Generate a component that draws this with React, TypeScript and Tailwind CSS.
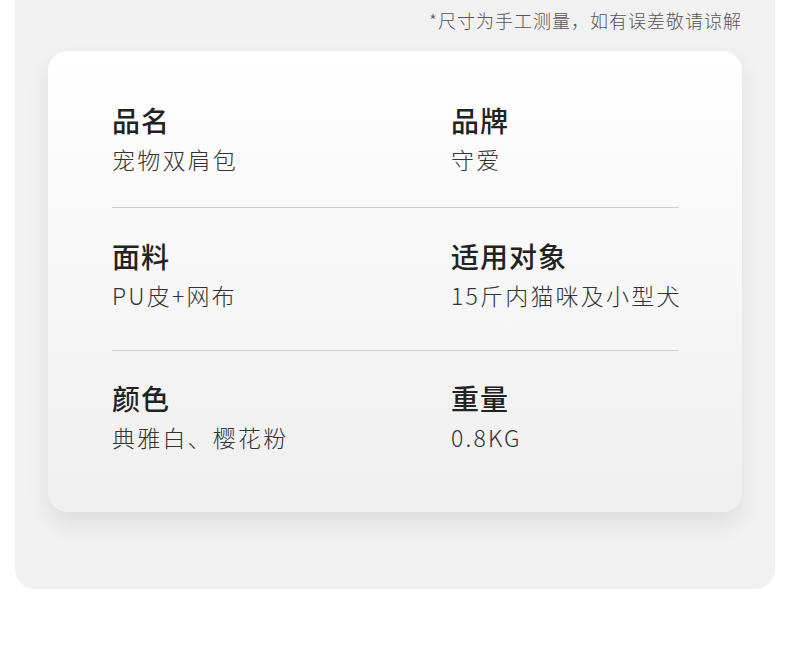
const specs = [
  [
    { label: "品名", value: "宠物双肩包" },
    { label: "品牌", value: "守爱" },
  ],
  [
    { label: "面料", value: "PU皮+网布" },
    { label: "适用对象", value: "15斤内猫咪及小型犬" },
  ],
  [
    { label: "颜色", value: "典雅白、樱花粉" },
    { label: "重量", value: "0.8KG" },
  ],
];

function SpecItem({ label, value }: { label: string; value: string }) {
  return (
    <div className="flex flex-col gap-[3px] whitespace-nowrap">
      <div className="text-[28px] leading-[36px] font-medium tracking-[1px] text-[#222]">{label}</div>
      <div className="text-[23px] leading-[36px] font-light tracking-[2.2px] text-[#333]">{value}</div>
    </div>
  );
}

export default function App() {
  return (
    <div
      className="min-h-[650px] bg-white"
      style={{ fontFamily: '"Noto Sans CJK SC", "Noto Sans", sans-serif' }}
    >
      <div className="mx-[15px] w-[760px] h-[589px] bg-[#f1f1f1] rounded-b-[20px] px-[33px] pt-[6px]">
        <p className="text-right text-[18px] leading-[28px] font-light tracking-[1px] text-[#555] whitespace-nowrap">
          *尺寸为手工测量，如有误差敬请谅解
        </p>
        <div className="mt-[17px] h-[461px] rounded-[20px] bg-gradient-to-b from-white to-[#efefef] shadow-[0_12px_22px_rgba(0,0,0,0.08)] pl-[64px] pr-[63px] pt-[51px]">
          {specs.map((row, i) => (
            <div key={i}>
              {i > 0 && (
                <div className={`h-px bg-[#cfcfcf] ${i === 1 ? "mt-[30px] mb-[30px]" : "mt-[37px] mb-[29px]"}`} />
              )}
              <div className="grid grid-cols-[339px_1fr]">
                {row.map((item) => (
                  <SpecItem key={item.label} {...item} />
                ))}
              </div>
            </div>
          ))}
        </div>
      </div>
    </div>
  );
}
